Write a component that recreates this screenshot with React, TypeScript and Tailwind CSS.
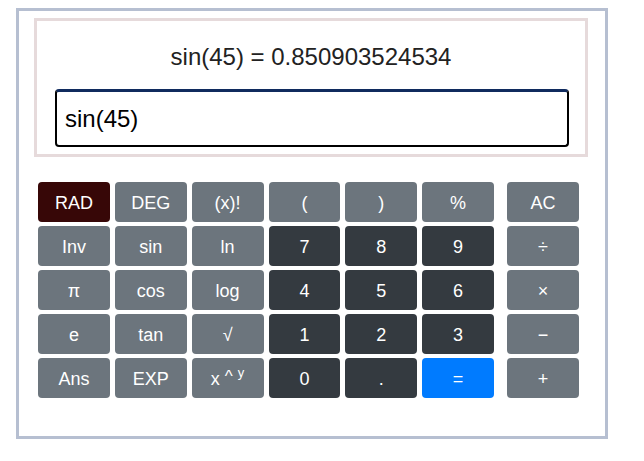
import React from 'react';

type Key = { label: React.ReactNode; tone: 'gray' | 'dark' | 'blue' | 'red' };

const gray = 'bg-[#6c757d]';
const tones = {
  gray,
  dark: 'bg-[#343a40]',
  blue: 'bg-[#007bff]',
  red: 'bg-[#370707]',
};

const mainKeys: Key[] = [
  { label: 'RAD', tone: 'red' },
  { label: 'DEG', tone: 'gray' },
  { label: '(x)!', tone: 'gray' },
  { label: '(', tone: 'gray' },
  { label: ')', tone: 'gray' },
  { label: '%', tone: 'gray' },
  { label: 'Inv', tone: 'gray' },
  { label: 'sin', tone: 'gray' },
  { label: 'ln', tone: 'gray' },
  { label: '7', tone: 'dark' },
  { label: '8', tone: 'dark' },
  { label: '9', tone: 'dark' },
  { label: 'π', tone: 'gray' },
  { label: 'cos', tone: 'gray' },
  { label: 'log', tone: 'gray' },
  { label: '4', tone: 'dark' },
  { label: '5', tone: 'dark' },
  { label: '6', tone: 'dark' },
  { label: 'e', tone: 'gray' },
  { label: 'tan', tone: 'gray' },
  { label: '√', tone: 'gray' },
  { label: '1', tone: 'dark' },
  { label: '2', tone: 'dark' },
  { label: '3', tone: 'dark' },
  { label: 'Ans', tone: 'gray' },
  { label: 'EXP', tone: 'gray' },
  {
    label: (
      <span>
        x <span className="relative -top-[3px] text-[17px]">^</span>{' '}
        <span className="relative -top-[8px] text-[13px]">y</span>
      </span>
    ),
    tone: 'gray',
  },
  { label: '0', tone: 'dark' },
  { label: '.', tone: 'dark' },
  { label: '=', tone: 'blue' },
];

const opKeys = ['AC', '÷', '×', '−', '+'];

function CalcButton({ label, tone }: Key) {
  return (
    <button
      className={`h-[40px] pt-[2px] rounded-[4px] text-white text-[18px] leading-none flex items-center justify-center ${tones[tone]}`}
    >
      {label}
    </button>
  );
}

export default function App() {
  return (
    <div className="bg-white w-[644px] h-[461px] pt-[8px] pl-[16px] font-['Liberation_Sans',Arial,sans-serif]">
      <div className="w-[592px] h-[431px] border-[3px] border-[#b6bfd1]">
        {/* Display */}
        <div className="ml-[15px] mt-[7px] w-[554px] h-[139px] border-[3px] border-[#e6dadb]">
          <div className="h-[68px] pt-[22px] text-center text-[24px] leading-[28px] text-[#222]">
            sin(45) = 0.850903524534
          </div>
          <div className="ml-[18px] w-[514px] h-[58px] rounded-[4px] border-2 border-black border-t-[3px] border-t-[#102b5e] pl-[8px] flex items-center text-[24px] text-black">
            sin(45)
          </div>
        </div>

        {/* Keypad */}
        <div className="ml-[19px] mt-[25px] flex">
          <div className="grid grid-cols-6 w-[456px] gap-x-[5px] gap-y-[4px]">
            {mainKeys.map((k, i) => (
              <CalcButton key={i} label={k.label} tone={k.tone} />
            ))}
          </div>
          <div className="ml-[13px] w-[72px] flex flex-col gap-[4px]">
            {opKeys.map((k) => (
              <CalcButton key={k} label={k} tone="gray" />
            ))}
          </div>
        </div>
      </div>
    </div>
  );
}
